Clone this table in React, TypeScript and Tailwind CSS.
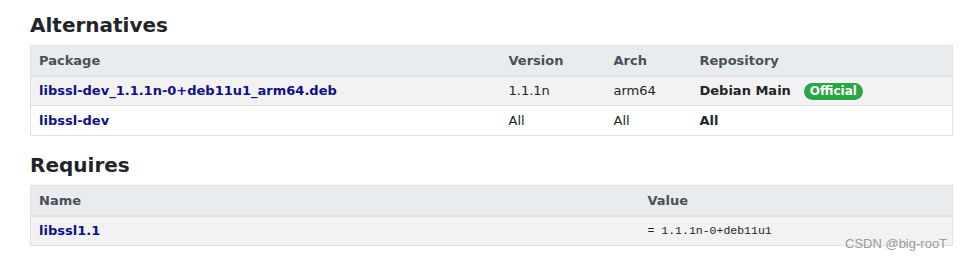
import React from 'react';

const link = 'text-[#0f0f8a] font-bold';

const Th: React.FC<{ children: React.ReactNode; className?: string }> = ({ children, className = '' }) => (
  <th className={`h-[30px] px-[8px] text-left align-middle font-bold text-[#495057] border-b-2 border-[#dee2e6] ${className}`}>
    {children}
  </th>
);

const Td: React.FC<{ children: React.ReactNode; className?: string }> = ({ children, className = '' }) => (
  <td className={`h-[30px] px-[8px] align-middle border-b border-[#dee2e6] ${className}`}>{children}</td>
);

export default function App() {
  return (
    <div className="relative w-[960px] h-[259px] bg-white pl-[30px] pr-[7px] pt-[13px] font-['DejaVu_Sans',sans-serif] text-[13px] text-[#212529]">
      <h2 className="text-[20px] leading-[24px] font-bold mb-[8px]">Alternatives</h2>
      <table className="w-full border border-[#dee2e6] border-collapse">
        <thead className="bg-[#e9ecef]">
          <tr>
            <Th className="w-[470px]">Package</Th>
            <Th className="w-[105px]">Version</Th>
            <Th className="w-[86px]">Arch</Th>
            <Th>Repository</Th>
          </tr>
        </thead>
        <tbody>
          <tr className="bg-[#f2f2f2]">
            <Td className={link}>libssl-dev_1.1.1n-0+deb11u1_arm64.deb</Td>
            <Td>1.1.1n</Td>
            <Td>arm64</Td>
            <Td>
              <span className="font-bold">Debian Main</span>
              <span className="ml-[13px] inline-block rounded-full bg-[#28a745] px-[6px] leading-[17px] text-[12px] font-bold text-white">
                Official
              </span>
            </Td>
          </tr>
          <tr className="bg-white">
            <Td className={link}>libssl-dev</Td>
            <Td>All</Td>
            <Td>All</Td>
            <Td className="font-bold">All</Td>
          </tr>
        </tbody>
      </table>

      <h2 className="text-[20px] leading-[24px] font-bold mt-[17px] mb-[8px]">Requires</h2>
      <table className="w-full border border-[#dee2e6] border-collapse">
        <thead className="bg-[#e9ecef]">
          <tr>
            <Th className="w-[609px]">Name</Th>
            <Th>Value</Th>
          </tr>
        </thead>
        <tbody>
          <tr className="bg-[#f2f2f2]">
            <Td className={link}>libssl1.1</Td>
            <Td className="font-['Liberation_Mono',monospace] text-[11.5px]">= 1.1.1n-0+deb11u1</Td>
          </tr>
        </tbody>
      </table>

      <span className="absolute left-[845px] top-[234px] font-['Liberation_Sans',sans-serif] text-[13px] text-[#9a9a9a]">
        CSDN @big-rooT
      </span>
    </div>
  );
}
